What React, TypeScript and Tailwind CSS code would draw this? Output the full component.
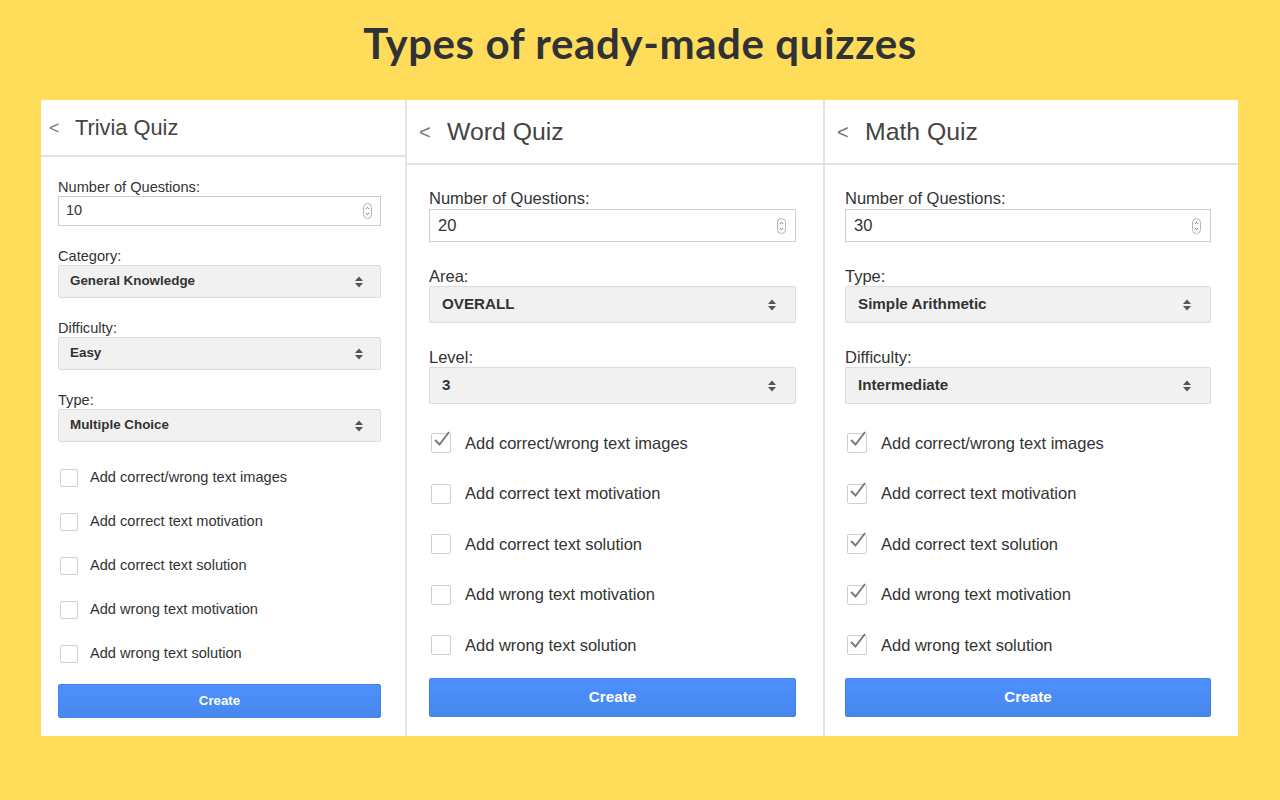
const CHECK_LABELS = [
  "Add correct/wrong text images",
  "Add correct text motivation",
  "Add correct text solution",
  "Add wrong text motivation",
  "Add wrong text solution",
];

type Size = "sm" | "lg";

type PanelData = {
  title: string;
  size: Size;
  count: string;
  selects: [string, string][];
  checks: boolean[];
  width: string;
  pad: string;
};

const panels: PanelData[] = [
  {
    title: "Trivia Quiz",
    size: "sm",
    count: "10",
    selects: [
      ["Category:", "General Knowledge"],
      ["Difficulty:", "Easy"],
      ["Type:", "Multiple Choice"],
    ],
    checks: [false, false, false, false, false],
    width: "w-[366px] border-r-2 border-[#e4e4e4]",
    pad: "pl-[17px] pr-[24px]",
  },
  {
    title: "Word Quiz",
    size: "lg",
    count: "20",
    selects: [
      ["Area:", "OVERALL"],
      ["Level:", "3"],
    ],
    checks: [true, false, false, false, false],
    width: "w-[418px] border-r-2 border-[#e4e4e4]",
    pad: "pl-[22px] pr-[27px]",
  },
  {
    title: "Math Quiz",
    size: "lg",
    count: "30",
    selects: [
      ["Type:", "Simple Arithmetic"],
      ["Difficulty:", "Intermediate"],
    ],
    checks: [true, true, true, true, true],
    width: "w-[413px]",
    pad: "pl-[20px] pr-[27px]",
  },
];

const styles = {
  sm: {
    header: "h-[57px] pl-[8px] pt-[2px]",
    chevron: "text-[18px] w-[26px]",
    title: "text-[21.8px]",
    body: "pt-[22px]",
    label: "text-[14.6px] leading-[16px]",
    input: "h-[30px] text-[14.6px] pl-[7px] pr-[8px] mt-[1px]",
    field: "mt-[22px]",
    select: "h-[33px] text-[13.4px] pl-[11px] pr-[16px] mt-[1px]",
    checks: "mt-[14px]",
    row: "h-[44px]",
    box: "w-[18px] h-[18px] ml-[2px] mr-[12px]",
    checkText: "text-[14.6px]",
    button: "h-[34px] text-[13.3px] mt-[8px]",
  },
  lg: {
    header: "h-[65px] pl-[12px] pt-[1px]",
    chevron: "text-[20px] w-[28px]",
    title: "text-[24.8px]",
    body: "pt-[24px]",
    label: "text-[16.5px] leading-[18px]",
    input: "h-[33px] text-[16.5px] pl-[8px] pr-[9px] mt-[2px]",
    field: "mt-[25px]",
    select: "h-[37px] text-[15.2px] pl-[12px] pr-[18px] mt-[1px]",
    checks: "mt-[14px]",
    row: "h-[50.5px]",
    box: "w-[20px] h-[20px] ml-[2px] mr-[14px]",
    checkText: "text-[16.5px]",
    button: "h-[39px] text-[15.2px] mt-[7px]",
  },
};

function Spinner() {
  return (
    <svg width="9" height="16" viewBox="0 0 9 16" fill="none">
      <rect x="0.5" y="0.5" width="8" height="15" rx="4" stroke="#b5b5b5" />
      <path d="M2.8 6 L4.5 4.3 L6.2 6" stroke="#777" strokeWidth="1" />
      <path d="M2.8 10 L4.5 11.7 L6.2 10" stroke="#777" strokeWidth="1" />
    </svg>
  );
}

function SelectArrows() {
  return (
    <svg width="10" height="14" viewBox="0 0 10 14">
      <path d="M1 6 L5 1.5 L9 6 Z" fill="#555" />
      <path d="M1 8 L5 12.5 L9 8 Z" fill="#555" />
    </svg>
  );
}

function Checkbox({ checked, className }: { checked: boolean; className: string }) {
  return (
    <div className={`relative shrink-0 rounded-[2px] border border-[#cfcfcf] bg-white ${className}`}>
      {checked ? (
        <svg className="absolute left-[1px] top-[-4px]" width="18" height="18" viewBox="0 0 18 18" fill="none">
          <path d="M2 10 L6.5 14.5 L16 2" stroke="#7a7a7a" strokeWidth="2" />
        </svg>
      ) : null}
    </div>
  );
}

function Panel({ data }: { data: PanelData }) {
  const s = styles[data.size];
  return (
    <div className={`flex h-full flex-col bg-white ${data.width}`}>
      <div className={`flex items-center border-b-2 border-[#e2e2e2] ${s.header}`}>
        <span className={`text-[#777] ${s.chevron}`}>&lt;</span>
        <span className={`text-[#444] ${s.title}`}>{data.title}</span>
      </div>
      <div className={`flex flex-col text-[#333] ${s.body} ${data.pad}`}>
        <div className={s.label}>Number of Questions:</div>
        <div className={`flex items-center justify-between border border-[#cdcdcd] bg-white ${s.input}`}>
          <span>{data.count}</span>
          <Spinner />
        </div>
        {data.selects.map(([label, value]) => (
          <div key={label} className={`flex flex-col ${s.field}`}>
            <div className={s.label}>{label}</div>
            <div
              className={`flex items-center justify-between rounded-[2px] border border-[#dcdcdc] bg-[#f1f1f1] font-bold text-[#333] ${s.select}`}
            >
              <span>{value}</span>
              <SelectArrows />
            </div>
          </div>
        ))}
        <div className={`flex flex-col ${s.checks}`}>
          {CHECK_LABELS.map((label, i) => (
            <div key={label} className={`flex items-center ${s.row}`}>
              <Checkbox checked={data.checks[i]} className={s.box} />
              <span className={`text-[#333] ${s.checkText}`}>{label}</span>
            </div>
          ))}
        </div>
        <button
          className={`w-full rounded-[2px] border border-[#3f84ec] bg-gradient-to-b from-[#4d90fe] to-[#4787ed] font-bold text-white ${s.button}`}
          type="button"
        >
          Create
        </button>
      </div>
    </div>
  );
}

export default function App() {
  return (
    <div className="flex h-[800px] w-full flex-col bg-[#ffdc5a] font-['Liberation_Sans',Arial,sans-serif]">
      <div className="flex h-[100px] items-center justify-center pb-[14px]">
        <h1 className="font-['Lato',sans-serif] text-[42px] font-bold tracking-[0.6px] text-[#2f3336]">
          Types of ready-made quizzes
        </h1>
      </div>
      <div className="ml-[41px] flex h-[636px] w-[1197px] bg-white">
        {panels.map((p) => (
          <Panel key={p.title} data={p} />
        ))}
      </div>
    </div>
  );
}
